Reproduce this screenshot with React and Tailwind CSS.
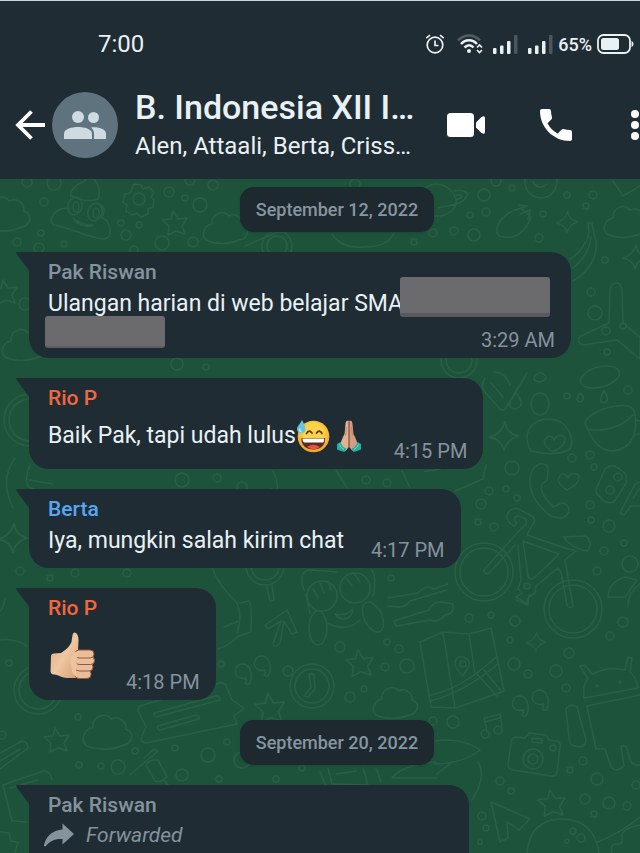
import React from "react";
import clsx from "clsx";

/* ---------- Icons ---------- */

const IconBack = () => (
  <svg viewBox="0 0 32 32" className="w-8 h-8" fill="none" stroke="currentColor" strokeWidth="3.8">
    <path d="M31 16H4M17.500 2.500L4 16l13.500 13.500" />
  </svg>
);

const IconGroup = () => (
  <svg viewBox="0 0 42 28" className="w-[42px] h-7" fill="currentColor">
    <circle cx="14" cy="6" r="6" />
    <circle cx="29.500" cy="6.500" r="5.500" />
    <path d="M0 28v-5.500C0 18 8 16 14 16s14 2 14 6.500V28z" />
    <path d="M27 16.500c7-1 15 1.500 15 6V28H30v-5.500c0-2.500-1.200-4.500-3-6z" />
  </svg>
);

const IconVideo = () => (
  <svg viewBox="0 0 38 24" className="w-[38px] h-6" fill="currentColor">
    <rect width="27" height="24" rx="3.500" />
    <path d="M29 9.500L34.500 4q3.500-2 3.500 1v14q0 3-3.500 1L29 14.500z" />
  </svg>
);

const IconPhone = () => (
  <svg viewBox="0 0 32 32" className="w-8 h-8" fill="currentColor">
    <path d="M2 0h7q2 0 2 2c0 2.300.4 4.400 1 6.300.2.700 0 1.500-.5 2L7.500 14.300c2.400 4.600 5.600 7.800 10.200 10.200l4-4c.6-.5 1.300-.7 2-.5 2 .6 4.100 1 6.300 1q2 0 2 2v7q0 2-2 2C13.500 32 0 18.500 0 2q0-2 2-2z" />
  </svg>
);

const IconDots = () => (
  <svg viewBox="0 0 8 30" className="w-2 h-[30px]" fill="currentColor">
    <circle cx="4" cy="4" r="4" />
    <circle cx="4" cy="15" r="4" />
    <circle cx="4" cy="26" r="4" />
  </svg>
);

const IconAlarm = () => (
  <svg viewBox="0 0 20 20" className="w-5 h-5" fill="none" stroke="currentColor" strokeWidth="1.700">
    <circle cx="10" cy="11" r="7.800" />
    <path d="M10 6.500V11.500H13.500M1.200 4.200L5 1.200M18.800 4.200L15 1.200" />
  </svg>
);

const IconWifi = () => (
  <svg viewBox="0 0 26 20" className="w-[26px] h-5" fill="none" stroke="currentColor">
    <path d="M1 6.500C7-.3 17-.3 23 6.500" strokeWidth="2.500" opacity=".25" />
    <path d="M4 10C8.500 5 15.500 5 20 10" strokeWidth="2.500" />
    <path d="M7.500 13.500c3-3 6.500-3 9 0" strokeWidth="2.500" />
    <circle cx="12" cy="17" r="2" fill="currentColor" stroke="none" />
    <path d="M20 13.500l2.500-2.500 2.500 2.500M20 16l2.500 2.500L25 16" strokeWidth="1.700" />
  </svg>
);

const IconSignal = () => (
  <svg viewBox="0 0 25 20" className="w-[25px] h-5" fill="currentColor">
    <rect x="0" y="14" width="3.500" height="6" rx="1" />
    <rect x="7" y="11.500" width="3.500" height="8.500" rx="1" />
    <rect x="14" y="7" width="3.500" height="13" rx="1" />
    <rect x="21" y="1" width="3.500" height="19" rx="1" opacity=".22" />
  </svg>
);

const IconBattery = () => (
  <svg viewBox="0 0 37 20" className="w-[37px] h-5">
    <rect x="1" y="1" width="32" height="18" rx="5.500" fill="none" stroke="currentColor" strokeWidth="1.800" />
    <rect x="4" y="4" width="18" height="12" rx="2.500" fill="currentColor" />
    <path d="M34.500 7q2 .5 2 3t-2 3z" fill="currentColor" />
  </svg>
);

const IconForward = () => (
  <svg viewBox="0 0 30 23" className="w-[30px] h-6" fill="currentColor">
    <path d="M18.500 0L30 10.500 18.500 21v-5.500C11 15 5.500 17.500 1.500 23 0 23 0 22 0 21.500 2 13 8.500 6.500 18.500 6z" />
  </svg>
);

const SweatSmile = () => (
  <svg viewBox="0 0 34 34" className="w-[34px] h-[34px]" role="img" aria-label="Grinning face with sweat">
    <defs>
      <radialGradient id="face" cx=".5" cy=".4" r=".6">
        <stop offset=".5" stopColor="#fdd34a" />
        <stop offset="1" stopColor="#f2a02b" />
      </radialGradient>
    </defs>
    <circle cx="17.500" cy="17.500" r="15.800" fill="url(#face)" />
    <path d="M10.500 14.500q2.500-4.500 5.500-.5M20.500 14q3-4 5.500.5" fill="none" stroke="#5a3c14" strokeWidth="1.700" strokeLinecap="round" />
    <path d="M5.500 19h23.500c.8 7-4.500 11.500-11.700 11.500S4.700 26 5.500 19z" fill="#5d2b1c" />
    <path d="M6.500 19.500h21.500c.5 1.500 0 3.200-1 4H8c-1-.8-1.700-2.500-1.500-4z" fill="#fff" />
    <path d="M11 28q6-4.500 13 0-6 4.500-13 0z" fill="#e5524a" />
    <path d="M6 1C4 5 1 7.500 1 10.500a4.300 4.300 0 008.500 0C9.500 7.500 7.500 4 6 1z" fill="#68c5e0" />
    <path d="M3.500 9.500q0 3 2 3.500" fill="none" stroke="#c7f0fa" strokeWidth="1.200" />
  </svg>
);

const FoldedHands = () => (
  <svg viewBox="0 0 26 34" className="w-[26px] h-[34px]" role="img" aria-label="Folded hands">
    <path d="M12.800 2C10 1 9.500 3 9.300 7L8.500 15c-2 4-3.500 7-4 10l5 7 3.300-4z" fill="#e3b193" />
    <path d="M13.200 2c2.800-1 3.300 1 3.500 5l.8 8c2 4 3.500 7 4 10l-5 7-3.300-4z" fill="#d49c80" />
    <path d="M13 3v25" fill="none" stroke="#8d5846" strokeWidth="1" />
    <path d="M9.500 17l1-9M16.500 17l-1-9" fill="none" stroke="#b57e66" strokeWidth=".8" />
    <path d="M1 25l3.500-2q2 5.500 6 6.500l-2 3.500Q5 32 1 30.500zM25 25l-3.500-2q-2 5.500-6 6.500l2 3.500q3.500-1 7.500-2.500z" fill="#27ae9d" />
    <path d="M3.500 25.500q1.500 3.500 4.500 5M22.500 25.500q-1.500 3.500-4.500 5" fill="none" stroke="#6adbc6" strokeWidth="1" />
  </svg>
);

const ThumbsUp = () => (
  <svg viewBox="0 0 46 48" className="w-[46px] h-12" role="img" aria-label="Thumbs up">
    <defs>
      <linearGradient id="skin" x1="0" y1="0" x2="1" y2="1">
        <stop offset="0" stopColor="#dba983" />
        <stop offset=".5" stopColor="#efc7a2" />
        <stop offset="1" stopColor="#d49e76" />
      </linearGradient>
    </defs>
    <path d="M1 24q0-2 3-2.500l7-.5c5-3 9-7 10.500-11L22.500 3q1-3.500 3.500-2 2.500 2 2.500 7L28 20v26H17c-5 0-8-3-13-3.500q-3 0-3.500-3z" fill="url(#skin)" />
    <g fill="#e9be99" stroke="#8f5a41" strokeWidth="1">
      <rect x="25" y="37.500" width="16" height="9" rx="4" />
      <rect x="25" y="31" width="18" height="8" rx="4" />
      <rect x="25" y="24.500" width="19.500" height="8" rx="4" />
      <rect x="25" y="18" width="19" height="8" rx="4" />
    </g>
    <path d="M21 24q2-4 7-4.500v5q-3 3-1 8-2 5 1 13-7-3-6-8.500-3-7-1-13z" fill="#ecc39c" />
  </svg>
);

/* ---------- Wallpaper ---------- */

const dots = [
  [54, 183, 7], [44, 202, 4], [169, 192, 5], [185, 198, 3], [200, 205, 7], [121, 223, 3], [139, 225, 3],
  [126, 235, 5], [41, 233, 3], [17, 242, 4], [64, 244, 3], [162, 243, 7], [193, 242, 5], [39, 248, 5],
  [213, 185, 5], [190, 180, 5], [27, 182, 5], [134, 250, 4], [25, 304, 6], [177, 364, 6], [206, 367, 3],
  [484, 195, 6], [470, 215, 3], [486, 212, 4], [474, 235, 6], [433, 233, 4], [454, 231, 4], [414, 242, 3],
  [512, 188, 3], [567, 195, 3], [593, 195, 4], [586, 206, 3], [543, 214, 3], [539, 238, 4], [355, 184, 5],
  [605, 260, 3], [591, 292, 4], [595, 313, 7], [606, 331, 4], [623, 326, 3], [607, 352, 3], [496, 181, 5],
  [182, 480, 7], [217, 478, 4], [242, 487, 5], [20, 571, 4], [75, 573, 4], [50, 578, 3], [127, 573, 4],
  [366, 480, 4], [387, 483, 4], [567, 396, 3], [628, 390, 4], [572, 458, 4], [590, 455, 4], [594, 467, 3],
  [512, 468, 7], [489, 491, 4], [506, 489, 3], [517, 498, 3], [481, 504, 5], [478, 522, 3], [494, 527, 4],
  [590, 505, 4], [591, 520, 3], [609, 526, 6], [624, 543, 3], [604, 551, 4], [630, 564, 8], [597, 571, 4],
  [391, 578, 3], [9, 663, 3], [78, 717, 3], [2, 735, 4], [135, 751, 3], [175, 748, 3], [208, 755, 7],
  [227, 742, 3], [118, 767, 7], [101, 766, 3], [79, 765, 3], [182, 775, 6], [219, 779, 3], [302, 768, 3],
  [276, 779, 3], [242, 760, 8], [288, 671, 5], [221, 664, 3], [469, 618, 4], [491, 615, 3], [515, 621, 5],
  [510, 640, 3], [623, 622, 5], [610, 636, 4], [569, 653, 5], [514, 664, 6], [528, 674, 4], [556, 671, 6],
  [566, 688, 4], [387, 642, 3], [399, 649, 4], [340, 647, 5], [385, 667, 4], [407, 666, 7], [364, 689, 3],
  [350, 697, 5], [433, 721, 4], [453, 722, 6], [500, 781, 4], [511, 791, 3], [583, 761, 4], [570, 770, 3],
  [597, 779, 6], [636, 785, 4], [585, 799, 5], [609, 803, 6], [627, 806, 4], [594, 814, 3], [482, 816, 4],
  [486, 828, 3], [480, 842, 2],
];

const stars = [[175, 223, 1], [5, 292, 1], [57, 740, 1], [270, 708, 1.2], [360, 663, 1.1], [552, 803, 1.1]];

const sparks = [[567, 222, 0.9], [635, 257, 1], [13, 538, 1.2], [504, 436, 1.2], [536, 642, 0.8]];

const clouds = [[5, 212, 1.1], [225, 226, 1], [626, 220, 1], [24, 343, 1], [107, 730, 1.1], [395, 701, 1]];

const hearts = [[555, 443, 1], [569, 481, 1]];

const rings = [
  [277, 246, 15], [30, 420, 26], [38, 690, 24], [312, 686, 22], [484, 572, 29], [573, 609, 29], [459, 360, 18],
  [265, 566, 19],
];

const Wallpaper = () => (
  <svg
    viewBox="0 179 640 674"
    preserveAspectRatio="xMinYMin slice"
    className="absolute inset-0 w-full h-full"
    fill="none"
    stroke="#296045"
    strokeWidth="1.500"
    strokeLinejoin="round"
    strokeLinecap="round"
    aria-hidden="true"
  >
    <defs>
      <path id="star" d="M-2-12L3-4l9-1-5 8 3 8-9-3-8 4 1-9-7-6 9-1z" />
      <path id="spark" d="M1-12Q2-2 12 0 2 3 0 12-2 3-12 1-2-2 1-12z" />
      <path id="cloud" d="M-19 14C-25 8-20-1-13-2-14-12-2-17 4-10 12-14 18-6 17-1 26 2 23 13 14 14 6 18-10 19-19 14z" />
      <path id="heart" d="M-2 9C-9 5-13-1-9-5-6-9-2-6-1-3 1-8 8-9 10-5 11 1 4 6-2 9z" />
      <path id="quote" d="M6 12C10 6 9-7 0-8-9-8-10 4-3 6 0 7 3 6 3 6s1 3-1 5q2 2 4 1z" />
    </defs>

    {dots.map(([x, y, r]) => (
      <circle key={`${x}-${y}`} cx={x} cy={y} r={r} />
    ))}
    {rings.map(([x, y, r]) => (
      <g key={`${x}-${y}`}>
        <circle cx={x} cy={y} r={r} />
        <circle cx={x} cy={y} r={r - 5} />
      </g>
    ))}
    {stars.map(([x, y, s]) => (
      <use key={`${x}-${y}`} href="#star" transform={`translate(${x} ${y}) scale(${s})`} />
    ))}
    {sparks.map(([x, y, s]) => (
      <use key={`${x}-${y}`} href="#spark" transform={`translate(${x} ${y}) scale(${s})`} />
    ))}
    {clouds.map(([x, y, s]) => (
      <use key={`${x}-${y}`} href="#cloud" transform={`translate(${x} ${y}) scale(${s})`} />
    ))}
    {hearts.map(([x, y, s]) => (
      <use key={`${x}-${y}`} href="#heart" transform={`translate(${x} ${y}) scale(${s})`} />
    ))}
    {[[243, 672], [262, 664], [520, 704], [540, 698]].map(([x, y]) => (
      <use key={x} href="#quote" transform={`translate(${x} ${y})`} />
    ))}

    {/* pile with eyes */}
    <path d="M69 209C57 205 46 221 54 225c17 3 40 15 51 14 9-3 5-19-3-21 4-9 1-13-3-13M71 197c-2-7 6-13 12-15 4-2 5-5 5-8 8 5 14 14 10 25M72 196c8 4 18 6 26 3M73 218c6 9 16 9 20 7-6 0-14-2-20-7z" />
    <ellipse cx="75" cy="206" rx="7" ry="9" transform="rotate(20 75 206)" />
    <ellipse cx="95" cy="212" rx="7" ry="9" transform="rotate(20 95 212)" />
    <ellipse cx="76" cy="207" rx="3" ry="5" />
    <ellipse cx="96" cy="213" rx="3" ry="5" />

    {/* gear */}
    <path d="M134 184l7 1 2 4 6-2 5 5-3 5 3 3-1 7-5 2v5l-7 3-4-4-5 2-6-4 1-6-4-3 2-8 5-1z" />
    <circle cx="139" cy="199" r="6" />

    {/* planet, carrot, face, banana, plane */}
    <path d="M425 188c13-9 27-1 31 11 2 10-9 18-22 17M454 191c19-3 15 9 2 13l-18 4M456 195c8-1 7 3 0 5" />
    <path d="M500 236c-9-4 1-24 21-28l10 9c-3 9-12 25-31 19zM516 210l11-4M520 214l10-4M527 206l-8-1M530 211l-2 8" />
    <circle cx="541" cy="182" r="16" />
    <path d="M533 182q6 9 14 2M613 181l10 15 17-10" />
    <path d="M573 281c18-10 28-30 21-47l-2-11h-4l1 11c-5 14-12 21-19 25M573 268c10-8 17-19 18-31" />
    <path d="M609 323l1-33c2-9 10-10 12 0l1 33 17 14v22l-23-19-34 5c-7-2-5-8 0-10z" />
    <path d="M245 246l28-12q10-4 14 0M332 234q10 15 32 13 24 0 30-14" />

    {/* bottle, drops, cookie and cup */}
    <path d="M485 378q-5 8 0 14l15 17q5 3 7-3l20-33M491 383l12 14M493 372q12-1 17 13M540 372q-12 8 0 10 12-4 0-10zM516 393q-12 14-1 16 12-3 1-16zM604 391q-7 11 0 12 7-3 0-12zM580 393q-6 8 0 9 7-3 0-9z" />
    <ellipse cx="540" cy="404" rx="9" ry="11" />
    <ellipse cx="600" cy="377" rx="20" ry="10" transform="rotate(-15 600 377)" />
    <path d="M531 451c-10-17 0-32 18-32s26 19 21 30c-11 7-28 5-39 2z" />
    <path d="M585 424c-1-12 42-26 49-14 5 22-2 40-22 41-15-1-21-14-27-27zM587 429c18 3 34-2 46-14M636 420l4 1M635 435l5-1" />

    {/* phone, dice, letter */}
    <path d="M533 469c6-8 16-6 15 1l-1 10c-4 4-6 3-6 7 1 9 7 14 12 20l9-4q7 1 7 8c-4 11-17 7-23 1-15-13-20-30-13-43z" />
    <path d="M605 469q7-6 13-1l7 5q3 6 0 12l-11 17q-6 2-11-2l-6-6q-2-5 1-9zM620 513l15-29 5-2M620 513l4 2 7-9h9M633 498l7-10" />
    <circle cx="618" cy="477" r="4" />
    <circle cx="610" cy="490" r="4" />

    {/* bicycle */}
    <path d="M484 570L518 532l8-8q2-4-2-6l-6-2c-4 0-5 4-1 7l-3 3c-6-3-9-9-6-13 4-6 10-5 14-2l10 5q5 4 1 8l-6 11 41 14 6 1M484 570q0 5 5 3L515 545" />
    <path d="M523 541l36 13-25 24q-4 3-6-2zM518 545l3 35-3 9 4 4-6 4 12 7 1-8 6-3 1-7 22-18 3 4 6 33q2 5 6 1l-8-46 11-9" />
    <path d="M563 537l22-1q4 1 5 8-1 6-3 7-14-2-24-14z" />
    <circle cx="527" cy="586" r="3" />
    <path d="M608 597q1-15 17-20l12 3-12 17zM628 607q-1-14 12-23" />

    {/* shapes beside the narrow bubbles */}
    <path d="M15 458q-16 21-2 50M30 465q-9 24 5 24M30 480l22 4M273 471q10 24-2 18M425 471q18 0 28-9M455 491l28-12 3-14M336 470l11 18M402 471l8 17" />
    <path d="M212 567c6 18 18 28 25 36 5 12 3 22 0 30M224 627l15-6M218 649q12-4 22-14M240 603l9-2q3 2 2 31l-12 4M267 587l3 14 4-1-2-15" />
    <path d="M265 625l22-15 10 22-5 2-8-13-4 22q-5 6-7 1l8-23-13 8z" />

    {/* face with glasses */}
    <circle cx="322" cy="596" r="15" />
    <circle cx="355" cy="588" r="15" />
    <path d="M304 590q-7-20 8-20l25 2M306 594l4 20M372 570q5 8 1 26M335 614q9 3 18-5-2 10-9 10-6 0-9-5zM327 623q20 10 33-3M313 589l5 8M320 583l4 10M328 581l3 9M346 578l6 8M354 573l6 9" />
    <ellipse cx="318" cy="628" rx="9" ry="17" />
    <ellipse cx="373" cy="617" rx="9" ry="16" transform="rotate(-25 373 617)" />

    {/* spanners */}
    <path d="M388 598l30-5q8-9 16-4l14-5M388 606l9 1q8 1 13-6l37-11M394 621l35-11q3-8 12-8l12 2q2 10-8 11-6 8-15 5l-34 6z" />
    <path d="M516 600l12 5-1-6 9-7" />

    {/* map */}
    <path d="M420 642l23-10 26 2 22-6 13 63-48 17-25-1zM443 632l12 76M469 634l6 40M430 695q30-5 66-38M430 701q33-8 68-37M477 674l20 22M484 670l17 21" />
    <path d="M463 676q-9-9-8-14 3-7 9-5 7 4 5 9z" />
    <circle cx="463" cy="664" r="3" />

    {/* ticket and label */}
    <path d="M138 711q0-5 5-6l76-22q7-1 8 5l5 12 12 8-10 8 3 8-91 19q-4 0-5-5l5-11zM154 713l62-17q4 0 4 4l-64 17q-3-1-2-4zM158 726l38-11q4 1 3 4l-39 11q-4-1-2-4z" />
    <path d="M0 753l22-12q6 1 6 7L0 769M0 761l20-12M0 640q14-2 27 6M5 598q-1 10-5 13M38 690l-5-11 8 8 5-11 2 14M309 674h5l1 15-7 8-4-1 7-9z" />

    {/* screwdriver, book, flower */}
    <path d="M130 775l20-17 8-7-4-2-10 9M146 765q4-6 12-5l9 17q-5 6-12 4zM163 779l6 7M3 785l40-14q8 0 9 9M3 785l9 36 15 1M10 788l28-8M0 832l9 1 2 8 7 1-3 10" />

    {/* note, camera, android */}
    <path d="M487 732l-3-14 16-4 2 13M485 722l15-4" />
    <circle cx="485" cy="734" r="4" />
    <circle cx="498" cy="730" r="4" />
    <path d="M511 742q1-5 6-5l8 1 4-5 17 2 3 5 8 1q4 1 3 6l-3 25q-1 5-6 4l-38-6q-5-1-5-5zM532 738l10 1v4l-10-1z" />
    <circle cx="533" cy="759" r="10" />
    <circle cx="533" cy="759" r="5" />
    <circle cx="553" cy="748" r="3" />
    <path d="M584 698c-1-14 1-15 4-19l-8-13 5-1 7 9q16-8 33-4l3-13 4 1-2 14q6 5 8 16zM587 706l53-11M587 706l9 43h9l6 18q6 6 13-1l-3-20h5l5 16q5 5 9 3M566 709q4-6 11-2l9 33q-1 9-11 6-5-1-6-7z" />
    <circle cx="597" cy="686" r="1" />
    <circle cx="620" cy="682" r="1" />

    {/* rocket, paper plane, moon */}
    <path d="M435 741q26-4 45 9-15 13-45 14M436 762q-32 2-44 16h45M450 764l-13 10M478 762q9 15-6 38M320 772l8 18M328 768l4 16 36 1-5-17M336 774l20-3M376 768l5 14" />
    <path d="M491 802l39 17-11 11-12-8 1 16-8 4z" />
    <path d="M527 853q3-34 35-34t37 34M598 842q24-10 42-25M612 853q-2-10 5-9t5-7 18-12" />
    <circle cx="573" cy="831" r="3" />
    <circle cx="581" cy="838" r="4" />
    <circle cx="567" cy="841" r="2" />
  </svg>
);

/* ---------- Chat pieces ---------- */

const DateChip = ({ children }) => (
  <div className="self-center flex items-center h-[45px] px-4 rounded-[14px] bg-[#1d282f] text-[18px] font-medium text-[#8696a0] shadow-sm">
    {children}
  </div>
);

const senderColors = {
  gray: "text-[#84939c]",
  orange: "text-[#f2683c]",
  blue: "text-[#58a6f5]",
};

const Bubble = ({ sender, color, className, children }) => (
  <article
    className={clsx(
      "relative self-start max-w-full ml-[29px] pl-[19px] pt-1.5 pb-1.5 rounded-[20px] rounded-tl-none bg-[#1f2c34]",
      className,
    )}
  >
    <svg viewBox="0 0 14 20" className="absolute top-0 -left-[13px] w-3.5 h-5" fill="#1f2c34">
      <path d="M1 0h13v20L1 2.500Q-.5 0 1 0z" />
    </svg>
    <h2 className={clsx("text-[21px] leading-7 font-medium", senderColors[color])}>{sender}</h2>
    {children}
  </article>
);

const Time = ({ children }) => (
  <time className="self-end shrink-0 text-[20px] leading-6 text-[#84939c]">{children}</time>
);

const Text = ({ className, children }) => (
  <p className={clsx("text-[23px] leading-9 whitespace-nowrap text-[#e9f1f4]", className)}>{children}</p>
);

const Header = () => (
  <header className="shrink-0 bg-[#202c33] border-t border-[#c4d6dc] text-white">
    <div className="flex items-center h-[86px] pl-[98px] pr-[6px]">
      <span className="text-[24px] text-[#e9f1f4]">7:00</span>
      <div className="ml-auto flex items-center text-[#e9f1f4]">
        <IconAlarm />
        <span className="ml-3 flex items-center gap-2.5">
          <IconWifi />
          <IconSignal />
          <IconSignal />
        </span>
        <span className="mx-[5px] text-[18px] font-medium">65%</span>
        <IconBattery />
      </div>
    </div>
    <div className="flex items-center h-[92px] pb-4 pl-3.5 pr-px">
      <button aria-label="Back">
        <IconBack />
      </button>
      <div className="ml-1.5 shrink-0 flex items-center justify-center w-[66px] h-[66px] rounded-full bg-[#5f737e] text-[#d0dae1]">
        <IconGroup />
      </div>
      <div className="ml-[17px] min-w-0 flex-1 whitespace-nowrap text-[#e9f1f4]">
        <h1 className="text-[34px] leading-[42px] font-medium">B. Indonesia XII I…</h1>
        <p className="text-[24px] leading-9">Alen, Attaali, Berta, Criss…</p>
      </div>
      <div className="flex items-center shrink-0">
        <button aria-label="Video call">
          <IconVideo />
        </button>
        <button aria-label="Call" className="ml-[55px]">
          <IconPhone />
        </button>
        <button aria-label="More options" className="ml-[59px]">
          <IconDots />
        </button>
      </div>
    </div>
  </header>
);

const App = () => (
  <div className="h-screen flex flex-col overflow-hidden bg-[#1d533b] font-['Roboto',sans-serif]">
    <Header />
    <main className="relative flex-1 overflow-hidden">
      <Wallpaper />
      <div className="relative flex flex-col gap-5 pt-2 -mr-[34px]">
        <DateChip>September 12, 2022</DateChip>

        <Bubble sender="Pak Riswan" color="gray" className="pr-4">
          <div className="flex items-center pr-[5px]">
            <Text>Ulangan harian di web belajar SMA</Text>
            <span className="relative -ml-[3px] -mt-3.5 w-[150px] h-10 rounded-[3px] bg-[#6b6b6d] border-b-4 border-[#59595e]" />
          </div>
          <div className="flex justify-between">
            <span className="-ml-[3px] -mt-1.5 w-[120px] h-8 rounded-[3px] bg-[#6b6b6d] border-b-2 border-[#5c5d62]" />
            <div className="flex pt-1.5">
              <Time>3:29 AM</Time>
            </div>
          </div>
        </Bubble>

        <Bubble sender="Rio P" color="orange" className="pr-4">
          <div className="flex gap-8 h-[51px]">
            <div className="flex items-center h-12">
              <Text>Baik Pak, tapi udah lulus</Text>
              <SweatSmile />
              <span className="ml-1.5">
                <FoldedHands />
              </span>
            </div>
            <Time>4:15 PM</Time>
          </div>
        </Bubble>

        <Bubble sender="Berta" color="blue" className="pr-4">
          <div className="flex gap-[27px] h-[39px]">
            <Text>Iya, mungkin salah kirim chat</Text>
            <Time>4:17 PM</Time>
          </div>
        </Bubble>

        <Bubble sender="Rio P" color="orange" className="pr-4">
          <div className="flex gap-[30px] h-[72px]">
            <div className="pt-2.5 pl-0.5">
              <ThumbsUp />
            </div>
            <Time>4:18 PM</Time>
          </div>
        </Bubble>

        <DateChip>September 20, 2022</DateChip>

        <Bubble sender="Pak Riswan" color="gray" className="w-[440px] pb-8">
          <div className="-ml-1 flex items-center gap-3 text-[#84939c]">
            <IconForward />
            <span className="text-[21px] leading-8 italic">Forwarded</span>
          </div>
        </Bubble>
      </div>
    </main>
  </div>
);

export default App;
